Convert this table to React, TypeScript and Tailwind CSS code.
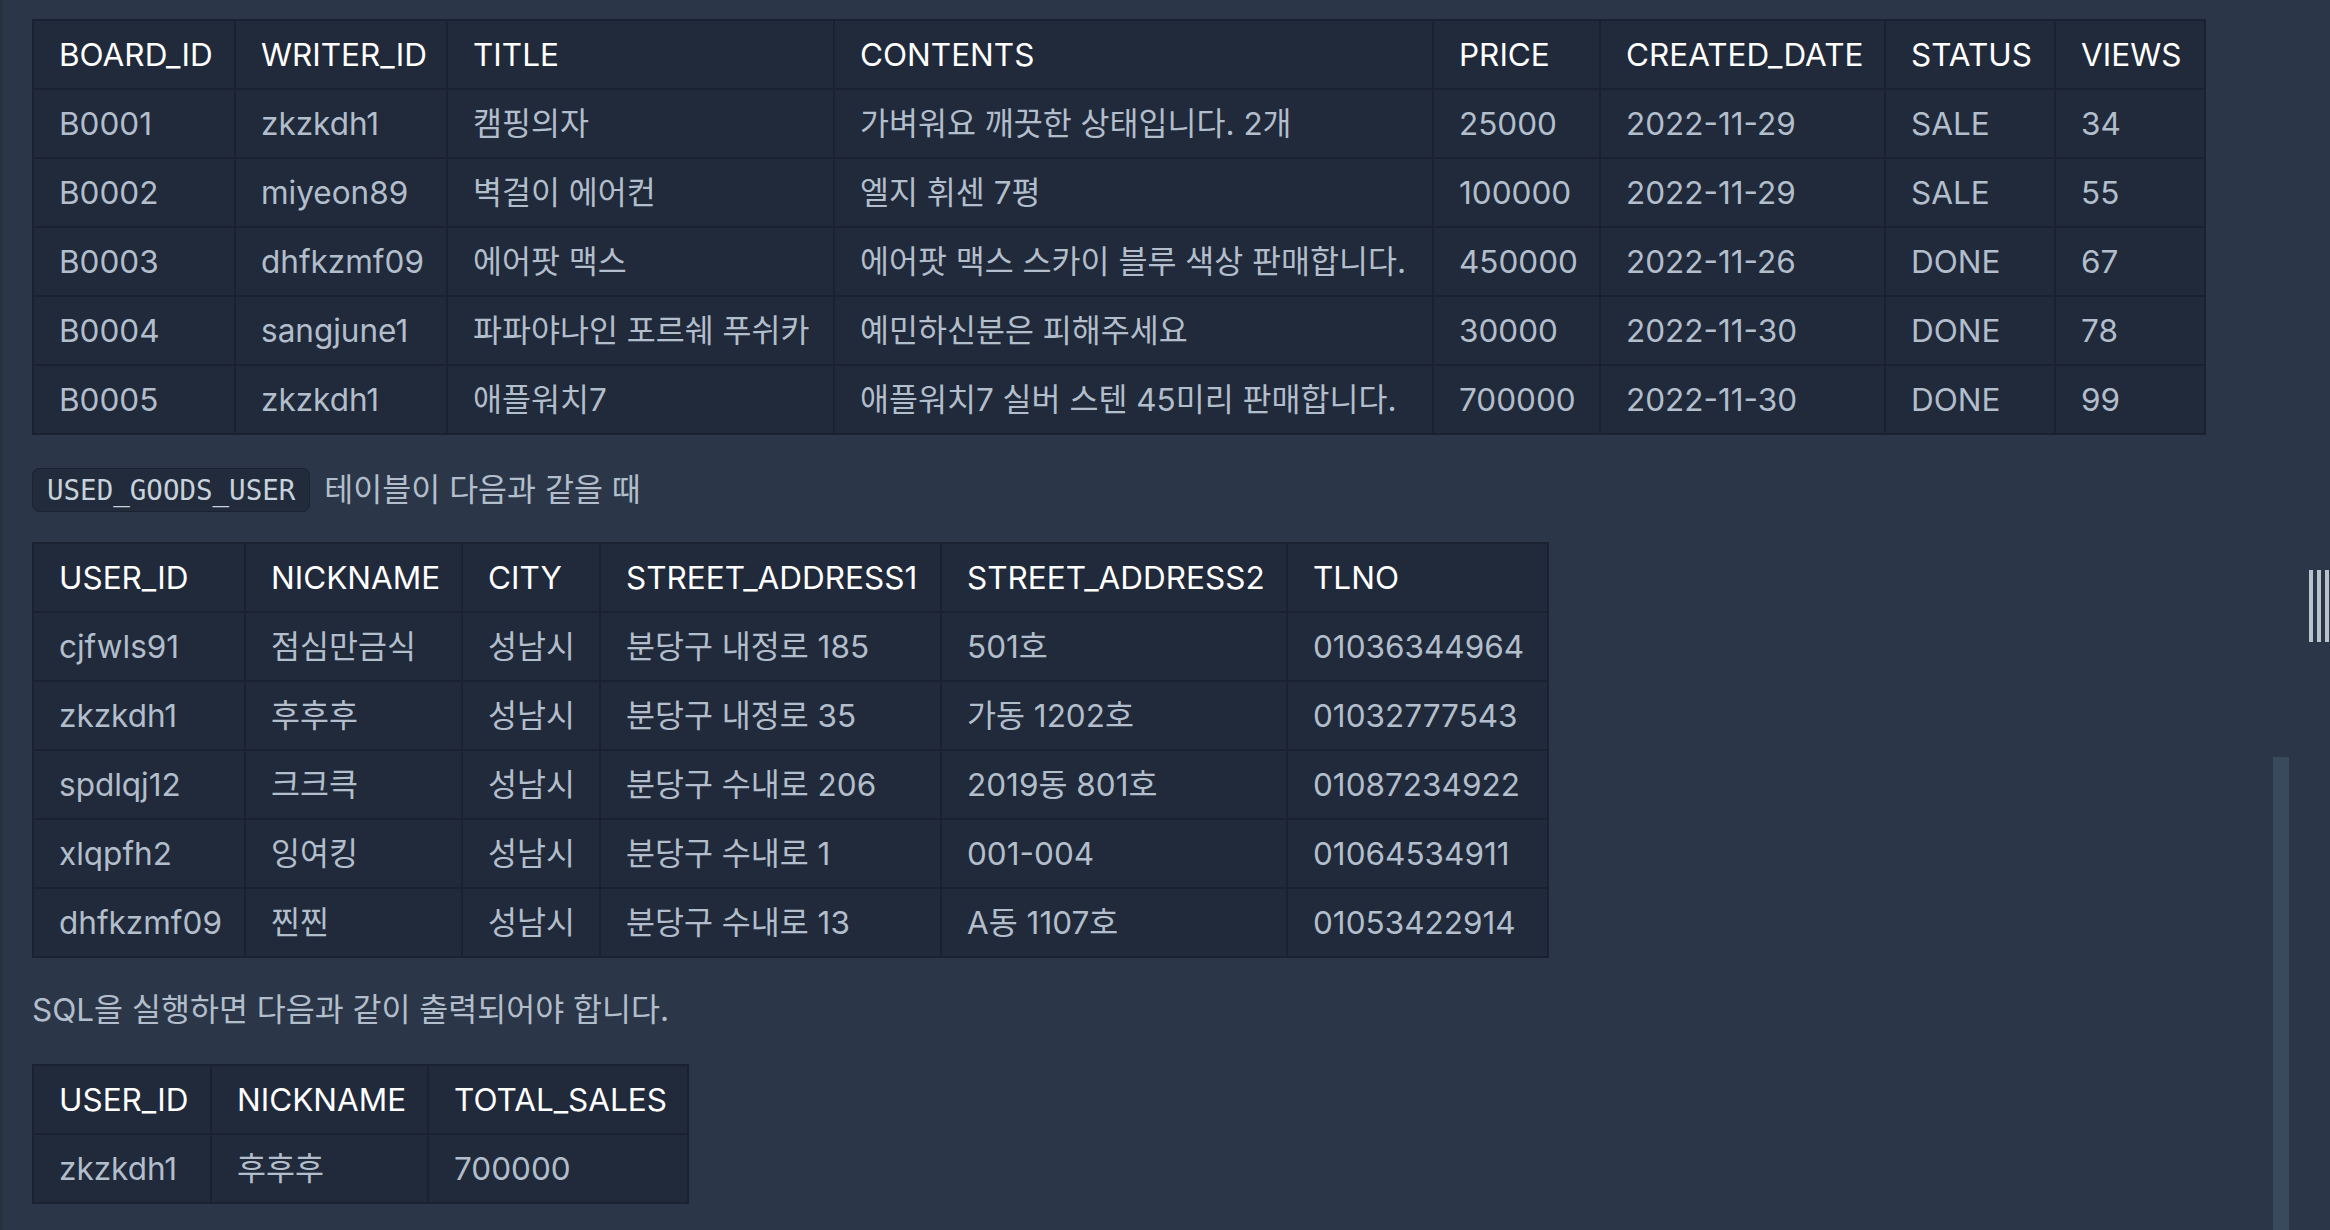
const FONT = "font-['Inter','Noto_Sans_CJK_KR',sans-serif]";

type TableProps = {
  cols: number[];
  head: string[];
  rows: string[][];
};

function DataTable({ cols, head, rows }: TableProps) {
  const template = cols.map((c) => c + "px").join(" ");
  return (
    <div className="w-fit bg-[#1a2231] p-[2px]">
      <div className="grid gap-[2px]" style={{ gridTemplateColumns: template }}>
        {head.map((h) => (
          <div
            key={h}
            className="flex h-[67px] items-center bg-[#212a3b] pl-[25px] text-[31.5px] text-white whitespace-nowrap"
          >
            {h}
          </div>
        ))}
        {rows.map((row, i) =>
          row.map((cell, j) => (
            <div
              key={i + "-" + j}
              className="flex h-[67px] items-center bg-[#212a3b] pl-[25px] text-[31.5px] text-[#b2becb] whitespace-nowrap"
            >
              {cell}
            </div>
          ))
        )}
      </div>
    </div>
  );
}

const boardCols = [200, 210, 385, 597, 165, 283, 168, 148];
const boardHead = [
  "BOARD_ID",
  "WRITER_ID",
  "TITLE",
  "CONTENTS",
  "PRICE",
  "CREATED_DATE",
  "STATUS",
  "VIEWS",
];
const boardRows = [
  ["B0001", "zkzkdh1", "캠핑의자", "가벼워요 깨끗한 상태입니다. 2개", "25000", "2022-11-29", "SALE", "34"],
  ["B0002", "miyeon89", "벽걸이 에어컨", "엘지 휘센 7평", "100000", "2022-11-29", "SALE", "55"],
  ["B0003", "dhfkzmf09", "에어팟 맥스", "에어팟 맥스 스카이 블루 색상 판매합니다.", "450000", "2022-11-26", "DONE", "67"],
  ["B0004", "sangjune1", "파파야나인 포르쉐 푸쉬카", "예민하신분은 피해주세요", "30000", "2022-11-30", "DONE", "78"],
  ["B0005", "zkzkdh1", "애플워치7", "애플워치7 실버 스텐 45미리 판매합니다.", "700000", "2022-11-30", "DONE", "99"],
];

const userCols = [210, 215, 136, 339, 344, 259];
const userHead = ["USER_ID", "NICKNAME", "CITY", "STREET_ADDRESS1", "STREET_ADDRESS2", "TLNO"];
const userRows = [
  ["cjfwls91", "점심만금식", "성남시", "분당구 내정로 185", "501호", "01036344964"],
  ["zkzkdh1", "후후후", "성남시", "분당구 내정로 35", "가동 1202호", "01032777543"],
  ["spdlqj12", "크크큭", "성남시", "분당구 수내로 206", "2019동 801호", "01087234922"],
  ["xlqpfh2", "잉여킹", "성남시", "분당구 수내로 1", "001-004", "01064534911"],
  ["dhfkzmf09", "찐찐", "성남시", "분당구 수내로 13", "A동 1107호", "01053422914"],
];

export default function App() {
  return (
    <div className={"relative h-[1230px] w-full overflow-hidden border-l-[3px] border-[#27313f] bg-[#2b3748] " + FONT}>
      <div className="flex flex-col pl-[29px] pt-[19px]">
        <DataTable cols={boardCols} head={boardHead} rows={boardRows} />

        <div className="mt-[33px] flex h-[44px] items-center gap-[14px]">
          <code className="flex h-[44px] items-center rounded-[7px] border border-[#1b2332] bg-[#222b3b] px-[14px] font-['DejaVu_Sans_Mono',monospace] text-[27.5px] leading-[44px] text-[#c8d2dc]">
            USED_GOODS_USER
          </code>
          <span className="text-[31.5px] leading-[44px] text-[#b2becb]">테이블이 다음과 같을 때</span>
        </div>

        <div className="mt-[30px]">
          <DataTable cols={userCols} head={userHead} rows={userRows} />
        </div>

        <p className="mt-[32px] text-[31.5px] leading-[40px] text-[#b2becb]">
          SQL을 실행하면 다음과 같이 출력되어야 합니다.
        </p>

        <div className="mt-[34px]">
          <DataTable
            cols={[176, 215, 258]}
            head={["USER_ID", "NICKNAME", "TOTAL_SALES"]}
            rows={[["zkzkdh1", "후후후", "700000"]]}
          />
        </div>
      </div>

      {/* scrollbar thumb */}
      <div className="absolute left-[2270px] top-[757px] h-[480px] w-[16px] bg-[#3a4a5d]" />

      {/* split handle */}
      <div className="absolute left-[2306px] top-[570px] flex h-[72px] gap-[4px]">
        <div className="h-full w-[4px] bg-[#b8c4cc]" />
        <div className="h-full w-[4px] bg-[#b8c4cc]" />
        <div className="h-full w-[4px] bg-[#b8c4cc]" />
      </div>
    </div>
  );
}
